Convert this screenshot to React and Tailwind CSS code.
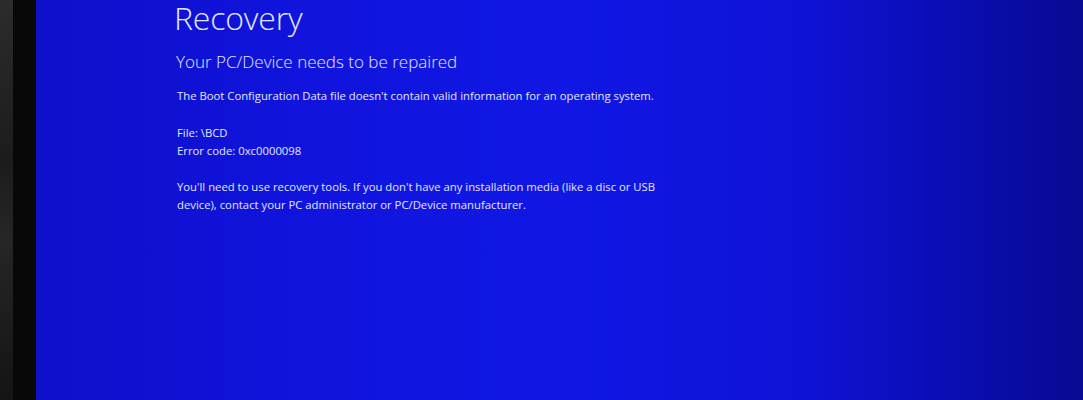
export default function App() {
  return (
    <div className="flex h-[400px] w-[1083px] overflow-hidden bg-black font-['Open_Sans','Liberation_Sans',sans-serif]">
      {/* monitor bezel */}
      <div className="flex w-[36px] shrink-0">
        <div className="w-[13px] bg-[linear-gradient(180deg,#2c2c2c_0%,#1c1c1c_40%,#262626_60%,#141414_100%)]" />
        <div className="flex-1 bg-[#080808]" />
      </div>

      {/* screen */}
      <div className="flex-1 bg-[linear-gradient(90deg,#0e10ca_0%,#1014dc_25%,#1117e4_50%,#0f13d8_72%,#0b0eb6_86%,#080a92_100%)] pl-[138px] text-[#e2e6ff]">
        <h1 className="mt-[-4px] text-[32px] font-light leading-[44px] tracking-[-0.2px]">Recovery</h1>
        <h2 className="mt-[10px] pl-[2px] text-[17px] font-light leading-[24px]">Your PC/Device needs to be repaired</h2>
        <p className="mt-[13px] pl-[3px] text-[11.3px] leading-[18px]">
          The Boot Configuration Data file doesn't contain valid information for an operating system.
        </p>
        <div className="mt-[19px] pl-[3px] text-[11.3px] leading-[18px]">
          <p>File: \BCD</p>
          <p>Error code: 0xc0000098</p>
        </div>
        <p className="mt-[18px] w-[486px] pl-[3px] text-[11.3px] leading-[18px]">
          You'll need to use recovery tools. If you don't have any installation media (like a disc or USB device), contact your PC administrator or PC/Device manufacturer.
        </p>
      </div>
    </div>
  );
}
